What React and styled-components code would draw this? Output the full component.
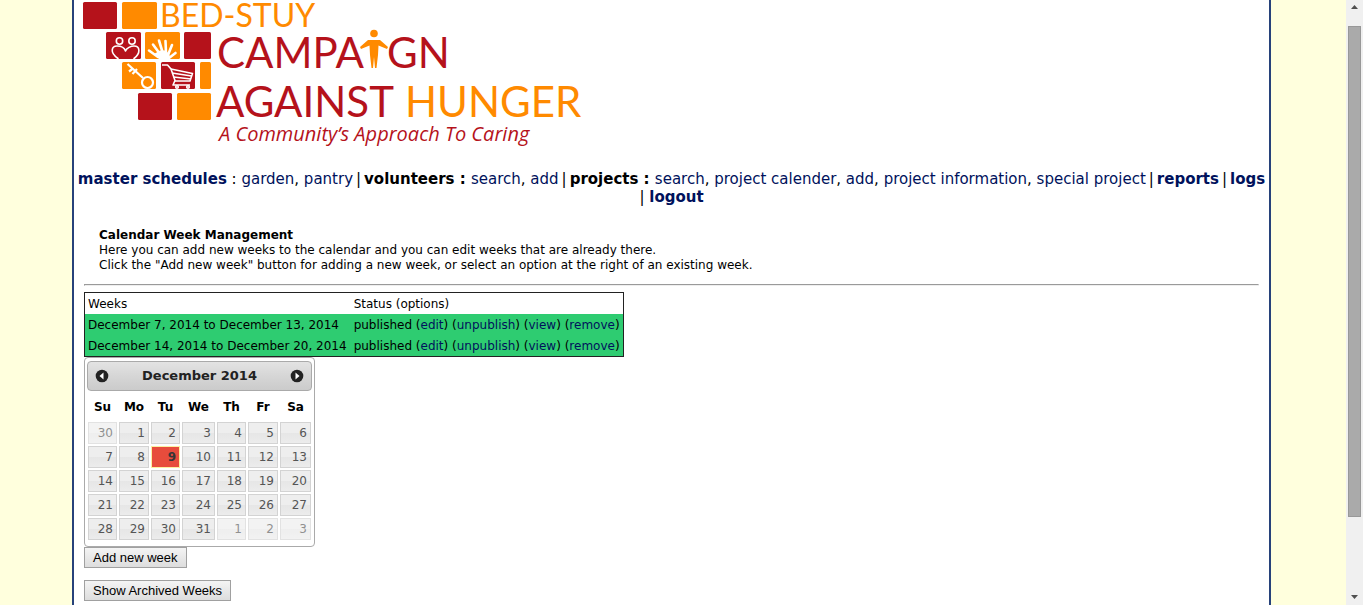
import React from "react";
import styled, { createGlobalStyle } from "styled-components";

const RED = "#b5121b";
const ORANGE = "#ff8a00";

const GlobalStyle = createGlobalStyle`
  *, *::before, *::after { box-sizing: border-box; }
  body {
    margin: 0;
    background: #ffffdd;
    color: #000;
    font-family: "DejaVu Sans", Verdana, sans-serif;
    font-size: 12px;
    line-height: 15px;
  }
`;

const Window = styled.div`
  display: flex;
  height: 100vh;
  overflow: hidden;
`;

const Viewport = styled.div`
  flex: 1;
  min-width: 0;
  padding: 0 75px 0 72px;
`;

const Page = styled.div`
  min-height: 100%;
  background: #fff;
  border: solid #27427a;
  border-width: 0 2px;
`;

const LogoArt = styled.svg`
  display: block;
  width: 520px;
  height: 170px;
`;

const Nav = styled.nav`
  display: flex;
  flex-wrap: wrap;
  justify-content: center;
  column-gap: 3px;
  font-size: 15px;
  line-height: 18px;
`;

const NavGroup = styled.span`
  white-space: nowrap;
`;

const Link = styled.a`
  color: #00125c;
  text-decoration: none;
  font-weight: ${(p) => (p.$bold ? 700 : 400)};
`;

const Main = styled.main`
  padding: 22px 10px 0;
`;

const Intro = styled.div`
  padding: 0 15px;
`;

const IntroTitle = styled.h1`
  margin: 0;
  font-size: 12px;
  line-height: 15px;
`;

const IntroText = styled.p`
  margin: 0;
`;

const Divider = styled.hr`
  margin: 11px 0 6px;
  border: solid;
  border-width: 1px;
  border-color: #9a9a9a #eee #eee #9a9a9a;
`;

const WeeksTable = styled.table`
  border: 1px solid #222;
  border-collapse: separate;
  border-spacing: 0;

  td, th {
    padding: 4px 3px 2px;
    font-weight: 400;
    text-align: left;
    white-space: nowrap;
  }
  th:first-child, td:first-child { padding-right: 4px; }
`;

const WeekRow = styled.tr`
  background: #2ecc71;
`;

const Picker = styled.section`
  width: 231px;
  height: 190px;
  padding: 3px 2px 0;
  border: 1px solid #aaa;
  border-radius: 4px;
`;

const PickerHeader = styled.header`
  display: flex;
  align-items: center;
  justify-content: space-between;
  height: 30px;
  padding: 0 7px;
  border: 1px solid #aaa;
  border-radius: 4px;
  background: linear-gradient(#e3e3e3, #d6d6d6 50%, #cbcbcb);
  color: #222;
  font-size: 13px;
  font-weight: 700;
`;

const PickerTitle = styled.span`
  padding-bottom: 2px;
`;

const ArrowButton = styled.button`
  display: flex;
  padding: 0;
  border: 0;
  background: none;
`;

const Days = styled.table`
  width: 225px;
  margin-top: 5px;
  table-layout: fixed;
  border-collapse: collapse;
`;

const DayCol = styled.col`
  width: ${(p) => p.$width}px;
`;

const DayName = styled.th`
  height: 25px;
  padding: 0 0 2px;
  text-align: center;
`;

const DayCell = styled.td`
  height: 24px;
  padding: 1px;
`;

const Day = styled.button`
  display: block;
  width: 100%;
  height: 22px;
  padding: 0 3px;
  border: 1px solid ${(p) => (p.$today ? "#fcefa1" : "#d3d3d3")};
  background: ${(p) => (p.$today ? "#e74c3c" : "linear-gradient(#eeeeee 50%, #e6e6e6 50%, #ececec)")};
  color: ${(p) => (p.$today ? "#363636" : "#555")};
  font: ${(p) => (p.$today ? 700 : 400)} 12px "DejaVu Sans", Verdana, sans-serif;
  text-align: right;
  opacity: ${(p) => (p.$muted ? 0.65 : 1)};
`;

const Actions = styled.div`
  display: flex;
  flex-direction: column;
  align-items: flex-start;
  gap: 12px;
`;

const ActionButton = styled.button`
  height: 21px;
  padding: 0 8px;
  border: 1px solid #a0a0a0;
  border-radius: 0;
  background: linear-gradient(#f4f4f4, #dddddd);
  color: #000;
  font: 13px "Liberation Sans", Arial, sans-serif;
`;

const ScrollBar = styled.div`
  display: flex;
  flex-direction: column;
  width: 17px;
  background: #f0f0f0;
`;

const ScrollArrow = styled.svg`
  display: block;
  width: 17px;
  height: 17px;
  fill: #505050;
`;

const ScrollTrack = styled.div`
  flex: 1;
  padding: 9px 2px 0;
`;

const ScrollThumb = styled.div`
  height: 87.4%;
  border: 1px solid #989898;
  background: #aaa;
`;

const tiles = [
  [83, 2, 34, RED], [122, 2, 35, ORANGE],
  [106, 32, 35, RED], [145, 32, 35, ORANGE], [184, 32, 27, RED],
  [122, 62, 34, ORANGE], [161, 62, 34, RED], [200, 62, 11, ORANGE],
  [138, 93, 34, RED], [177, 93, 34, ORANGE],
];

function Logo() {
  return (
    <LogoArt viewBox="74 0 520 170" role="img" aria-label="Bed-Stuy Campaign Against Hunger">
      {tiles.map(([x, y, w, fill]) => (
        <rect key={`${x}-${y}`} x={x} y={y} width={w} height="27" rx="1.5" fill={fill} />
      ))}
      <g fill="none" stroke="#fff" strokeWidth="1.6" strokeLinecap="round" strokeLinejoin="round">
        <circle cx="119.5" cy="41" r="3.2" />
        <circle cx="132" cy="41" r="3.2" />
        <path d="M118 58.500C109 52 112 46 117 46C121 46 124.500 48 125.500 51C126.500 48 131 46 134 46C140 46 141 53 134 58.500" />
      </g>
      <g fill="none" stroke="#fff" strokeWidth="2.600" strokeLinecap="round">
        <path d="M158 57L149 50.500M160 54L153 44.500M162.500 52L159 40.500M166 53L165.500 41M168 55L172 45M169 58L175.500 53" />
      </g>
      <path d="M154 54L160 50.500H166L169.500 55L170 59H159Z" fill="#fff" />
      <g fill="none" stroke="#fff" strokeWidth="2.2">
        <circle cx="147.500" cy="82.500" r="5.500" />
        <path d="M143 78L127.500 64M133 68.500L129 71.500M137 69L132.500 74" />
      </g>
      <g fill="none" stroke="#fff" strokeWidth="1.6" strokeLinejoin="round">
        <path d="M162 65H167.500L171 69L175 80.500L173 85H190" />
        <path d="M171 69L192.500 73.500L190 81H175M172 73L191.500 76M173.500 77L191 79" />
        <circle cx="177" cy="87" r="1.300" />
        <circle cx="188" cy="87" r="1.300" />
      </g>
      <g fontFamily="Lato, sans-serif" fill={RED}>
        <text x="160" y="27" fontSize="32" fill={ORANGE}>BED-STUY</text>
        <text x="217" y="68" fontSize="42">CAMPA</text>
        <text x="387" y="68" fontSize="42">GN</text>
        <text x="216" y="117" fontSize="42">AGAINST</text>
        <text x="405" y="117" fontSize="42" fill={ORANGE}>HUNGER</text>
      </g>
      <g fill={ORANGE}>
        <circle cx="374" cy="33.500" r="3.800" />
        <path d="M368 40H380L388 47L387 49L378.500 45.500L378 55L376.500 68H375L374 57L373 68H371.500L370 55L369.500 45.500L361 49L360 47Z" />
      </g>
      <text x="219" y="141" fontFamily="Open Sans, sans-serif" fontStyle="italic" fontSize="20" fill={RED}>
        A Community’s Approach To Caring
      </text>
    </LogoArt>
  );
}

const A = ({ children, bold }) => <Link href="#" $bold={bold}>{children}</Link>;

function SiteNav() {
  return (
    <Nav>
      <NavGroup><A bold>master schedules</A> : <A>garden</A>, <A>pantry</A></NavGroup>
      <span>|</span>
      <NavGroup><b>volunteers : </b><A>search</A>, <A>add</A></NavGroup>
      <span>|</span>
      <NavGroup>
        <b>projects : </b><A>search</A>, <A>project calender</A>, <A>add</A>, <A>project information</A>, <A>special project</A>
      </NavGroup>
      <span>|</span>
      <A bold>reports</A>
      <span>|</span>
      <A bold>logs</A>
      <NavGroup>| <A bold>logout</A></NavGroup>
    </Nav>
  );
}

const weeks = ["December 7, 2014 to December 13, 2014", "December 14, 2014 to December 20, 2014"];
const options = ["edit", "unpublish", "view", "remove"];
const dayNames = ["Su", "Mo", "Tu", "We", "Th", "Fr", "Sa"];
const dayWidths = [31, 32, 31, 35, 31, 32, 33];
const cells = Array.from({ length: 35 }, (_, i) => {
  if (i === 0) return { n: 30, muted: true };
  if (i > 31) return { n: i - 31, muted: true };
  return { n: i, today: i === 9 };
});

function MonthArrow({ label, d }) {
  return (
    <ArrowButton type="button" aria-label={label}>
      <svg width="14" height="14" viewBox="0 0 14 14">
        <circle cx="7" cy="7" r="6.300" fill="#222" />
        <path d={d} fill="#fff" />
      </svg>
    </ArrowButton>
  );
}

function DatePicker() {
  return (
    <Picker>
      <PickerHeader>
        <MonthArrow label="Previous month" d="M8.500 3.500V10.500L4.500 7Z" />
        <PickerTitle>December 2014</PickerTitle>
        <MonthArrow label="Next month" d="M5.500 3.500V10.500L9.500 7Z" />
      </PickerHeader>
      <Days>
        <colgroup>{dayWidths.map((w, i) => <DayCol key={i} $width={w} />)}</colgroup>
        <thead>
          <tr>{dayNames.map((d) => <DayName key={d} scope="col">{d}</DayName>)}</tr>
        </thead>
        <tbody>
          {[0, 1, 2, 3, 4].map((w) => (
            <tr key={w}>
              {cells.slice(w * 7, w * 7 + 7).map((c) => (
                <DayCell key={c.n}>
                  <Day type="button" $muted={c.muted} $today={c.today}>{c.n}</Day>
                </DayCell>
              ))}
            </tr>
          ))}
        </tbody>
      </Days>
    </Picker>
  );
}

export default function App() {
  return (
    <>
      <GlobalStyle />
      <Window>
        <Viewport>
          <Page>
            <Logo />
            <SiteNav />
            <Main>
              <Intro>
                <IntroTitle>Calendar Week Management</IntroTitle>
                <IntroText>
                  Here you can add new weeks to the calendar and you can edit weeks that are already there.
                  <br />
                  Click the "Add new week" button for adding a new week, or select an option at the right of an existing week.
                </IntroText>
              </Intro>
              <Divider />
              <WeeksTable>
                <thead>
                  <tr><th scope="col">Weeks</th><th scope="col">Status (options)</th></tr>
                </thead>
                <tbody>
                  {weeks.map((week) => (
                    <WeekRow key={week}>
                      <td>{week}</td>
                      <td>
                        published
                        {options.map((o) => <React.Fragment key={o}> (<A>{o}</A>)</React.Fragment>)}
                      </td>
                    </WeekRow>
                  ))}
                </tbody>
              </WeeksTable>
              <DatePicker />
              <Actions>
                <ActionButton type="button">Add new week</ActionButton>
                <ActionButton type="button">Show Archived Weeks</ActionButton>
              </Actions>
            </Main>
          </Page>
        </Viewport>
        <ScrollBar aria-hidden="true">
          <ScrollArrow viewBox="0 0 17 17"><path d="M5 9L8.500 5L12 9Z" /></ScrollArrow>
          <ScrollTrack><ScrollThumb /></ScrollTrack>
          <ScrollArrow viewBox="0 0 17 17"><path d="M5 7L8.500 11L12 7Z" /></ScrollArrow>
        </ScrollBar>
      </Window>
    </>
  );
}
